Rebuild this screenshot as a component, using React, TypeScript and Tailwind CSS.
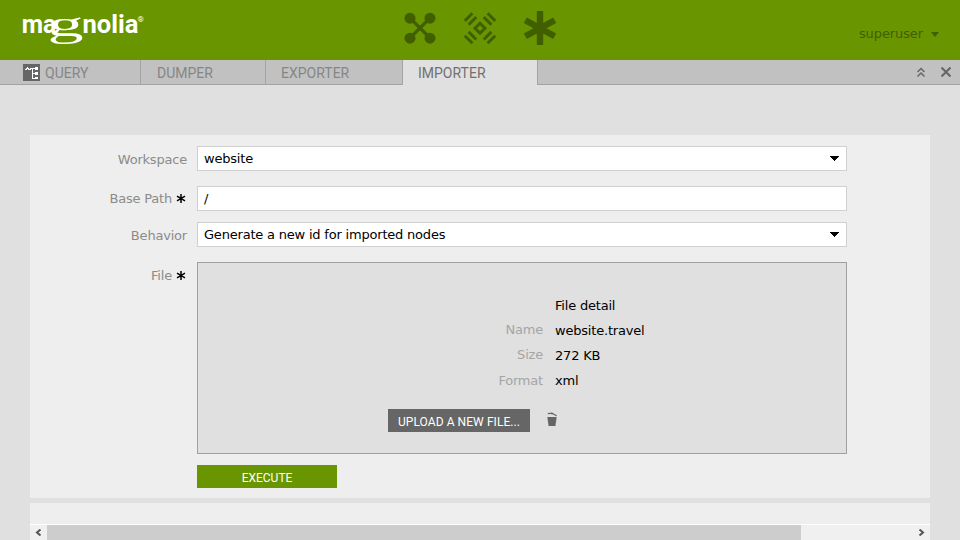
import React from "react";

const verdana = "font-['DejaVu_Sans',Verdana,sans-serif] text-[13px]";
const din = "font-['Roboto',sans-serif]";

function Logo() {
  return (
    <svg width="126" height="42" viewBox="0 0 126 42" fill="#fff" className="block overflow-visible">
      <g fontFamily="Roboto, sans-serif" fontWeight="700" fontSize="26">
        <text x="0.7" y="26" textLength="34.5" lengthAdjust="spacingAndGlyphs">ma</text>
        <text x="61.5" y="26" textLength="56" lengthAdjust="spacingAndGlyphs">nolia</text>
      </g>
      <text transform="translate(26.5 29) scale(2.07 1)" fontFamily="Liberation Serif, serif" fontSize="35" x="0" y="0">g</text>
      <text x="116.5" y="14.5" fontFamily="Roboto, sans-serif" fontSize="8">®</text>
    </svg>
  );
}

function AppsIcon() {
  return (
    <svg width="34" height="36" viewBox="0 0 34 36" fill="#425f00" className="block">
      <path d="M7 8 L27 28 M27 8 L7 28" stroke="#425f00" strokeWidth="3.2" />
      <circle cx="7" cy="8.2" r="5.5" />
      <circle cx="27" cy="8.2" r="5.5" />
      <circle cx="7" cy="28.2" r="5.5" />
      <circle cx="27" cy="28.2" r="5.5" />
    </svg>
  );
}

function PulseIcon() {
  return (
    <svg width="34" height="36" viewBox="0 0 34 36" fill="none" stroke="#425f00" strokeWidth="2.9" className="block">
      <path d="M17 13.3 L22 18.3 L17 23.3 L12 18.3Z" />
      <path d="M1.8 10.9 L9.4 3.3 M5.6 14.7 L13.2 7.1" />
      <path d="M32.2 10.9 L24.6 3.3 M28.4 14.7 L20.8 7.1" />
      <path d="M1.8 25.7 L9.4 33.3 M5.6 21.9 L13.2 29.5" />
      <path d="M32.2 25.7 L24.6 33.3 M28.4 21.9 L20.8 29.5" />
    </svg>
  );
}

function AsteriskIcon() {
  return (
    <svg width="34" height="36" viewBox="0 0 34 36" stroke="#425f00" strokeWidth="6.4" className="block">
      <path d="M17 1 V35 M2.3 10.2 L31.7 26.2 M31.7 10.2 L2.3 26.2" />
    </svg>
  );
}

function QueryIcon() {
  return (
    <svg width="17" height="17" viewBox="0 0 17 17" className="block" shapeRendering="crispEdges">
      <rect width="17" height="17" fill="#666" />
      <path d="M2 5h1V4h1V3h1v1h1v1h2v1H5V5H4v1H2z" fill="#fff" />
      <path d="M7 4h7M9.5 4v11M9 9.5h4M9 14.5h4" stroke="#fff" fill="none" />
      <path d="M12 3h3v3h-3zM12 8h3v3h-3zM12 13h3v2h-3z" fill="#fff" />
    </svg>
  );
}

function Star() {
  return (
    <svg width="10" height="10" viewBox="0 0 10 10" fill="none" stroke="#000" strokeWidth="1.5" className="ml-1 mr-px block">
      <path d="M5 0V9M1 2.2L9 6.8M9 2.2L1 6.8" />
    </svg>
  );
}

function Caret() {
  return (
    <svg width="9" height="5" viewBox="0 0 9 5" className="block" shapeRendering="crispEdges">
      <path d="M0 0h9v1H8v1H7v1H6v1H5v1H4V4H3V3H2V2H1V1H0z" />
    </svg>
  );
}

function Row({ label, required, labelTop, className, children }: { label: string; required?: boolean; labelTop: string; className: string; children: React.ReactNode }) {
  return (
    <div className={`flex ${className}`}>
      <div className={`mr-[10px] flex h-[18px] w-[157px] shrink-0 items-center justify-end leading-[18px] text-[#8b8b8b] ${labelTop}`}>
        <span className="tracking-[-0.2px]">{label}</span>
        {required && <Star />}
      </div>
      {children}
    </div>
  );
}

function Field({ value, select }: { value: string; select?: boolean }) {
  return (
    <div className="flex h-[25px] w-[650px] items-center justify-between border border-[#d0d0d0] bg-white pr-[7px] pl-[6px] leading-[22px] text-black">
      <span className="tracking-[-0.2px]">{value}</span>
      {select && <Caret />}
    </div>
  );
}

function Detail({ label, value, raised }: { label: string; value: string; raised?: boolean }) {
  return (
    <div className="flex h-[25px] tracking-[-0.2px]">
      <div className={`mr-3 w-[345px] text-right text-[#a5a5a5] ${raised ? "leading-[23px]" : "leading-[25px]"}`}>{label}</div>
      <div className="leading-[25px] text-black">{value}</div>
    </div>
  );
}

export default function App() {
  return (
    <div className={`flex h-[540px] w-[960px] flex-col overflow-hidden bg-[#e0e0e0] ${verdana}`}>
      <header className="flex h-[60px] shrink-0 bg-[#699600]">
        <div className="w-[403px] pt-[7px] pl-[21px]">
          <Logo />
        </div>
        <nav className="flex gap-[26px] pt-[10px]">
          <AppsIcon />
          <PulseIcon />
          <AsteriskIcon />
        </nav>
        <div className="mt-[25px] ml-auto flex h-[18px] items-center gap-2 pr-[21px] text-[#425f00]">
          <span className="tracking-[-0.1px]">superuser</span>
          <svg width="8" height="5" viewBox="0 0 8 5" className="block">
            <path d="M0 0h8L4 5z" fill="#425f00" />
          </svg>
        </div>
      </header>

      <div className={`flex h-[25px] shrink-0 text-[14px] leading-[26px] text-[#868686] ${din}`}>
        <div className="flex w-[141px] border-r border-b border-[#a3a3a3] bg-[#c1c1c1] pl-[23px]">
          <div className="mt-1 mr-[5px]">
            <QueryIcon />
          </div>
          <span>QUERY</span>
        </div>
        <div className="w-[125px] border-r border-b border-[#a3a3a3] bg-[#c1c1c1] pl-4">DUMPER</div>
        <div className="w-[137px] border-r border-b border-[#a3a3a3] bg-[#c1c1c1] pl-[15px]">EXPORTER</div>
        <div className="w-[134px] bg-[#e0e0e0] pl-[15px] text-[#707070]">IMPORTER</div>
        <div className="flex flex-1 items-start justify-end border-b border-l border-[#a3a3a3] bg-[#c1c1c1] pt-[7px] pr-[9px]">
          <svg width="8" height="11" viewBox="0 0 8 11" fill="none" stroke="#666" strokeWidth="1.5" className="mr-4 block">
            <path d="M0.5 5L4 1.5L7.5 5M0.5 9.5L4 6L7.5 9.5" />
          </svg>
          <svg width="10" height="10" viewBox="0 0 10 10" stroke="#666" strokeWidth="2.1" className="block">
            <path d="M0.5 0.5L9.5 9.5M9.5 0.5L0.5 9.5" />
          </svg>
        </div>
      </div>

      <main className="mx-[30px] mt-[50px] h-[363px] shrink-0 bg-[#eee] pt-[11px]">
        <Row label="Workspace" labelTop="mt-[5px]" className="h-10">
          <Field value="website" select />
        </Row>
        <Row label="Base Path" required labelTop="mt-1" className="h-9">
          <Field value="/" />
        </Row>
        <Row label="Behavior" labelTop="mt-[5px]" className="h-10">
          <Field value="Generate a new id for imported nodes" select />
        </Row>
        <Row label="File" required labelTop="mt-[5px]" className="h-[203px]">
          <div className="h-[192px] w-[650px] border border-[#a0a0a0] bg-[#e0e0e0] pt-[30px]">
            <Detail label="" value="File detail" />
            <Detail label="Name" value="website.travel" raised />
            <Detail label="Size" value="272 KB" raised />
            <Detail label="Format" value="xml" />
            <div className="mt-4 ml-[190px] flex">
              <button className={`h-[23px] w-[142px] bg-[#666] pt-px text-center text-[12px] leading-[25px] tracking-[0.07px] whitespace-nowrap text-white ${din}`}>
                UPLOAD A NEW FILE...
              </button>
              <svg width="10" height="14" viewBox="0 0 10 14" fill="#666" className="mt-[3px] ml-[17px] block">
                <path d="M0.3 5h9.4L8.4 14H1.6z" />
                <path d="M0.8 1.6C4 1 7 1.8 9.6 3.8M4 1L6.6 1.9" stroke="#666" strokeWidth="1.4" fill="none" />
              </svg>
            </div>
          </div>
        </Row>
        <button className={`ml-[167px] block h-[23px] w-[140px] bg-[#699600] pt-px text-center text-[12px] leading-[25px] text-white ${din}`}>
          EXECUTE
        </button>
      </main>

      <section className="mx-[30px] mt-[5px] flex h-[37px] shrink-0 flex-col bg-[#eee]">
        <div className="h-[21px]" />
        <div className="flex h-4 border-t border-white bg-[#f0f0f0]">
          <div className="flex w-[17px] justify-center pt-1">
            <svg width="7" height="7" viewBox="0 0 7 7" fill="none" stroke="#555" strokeWidth="2" className="block">
              <path d="M5.5 0.5L2 3.5L5.5 6.5" />
            </svg>
          </div>
          <div className="w-[754px] bg-[#cdcdcd]" />
          <div className="ml-auto pt-1 pr-[5px]">
            <svg width="7" height="7" viewBox="0 0 7 7" fill="none" stroke="#555" strokeWidth="2" className="block">
              <path d="M1.5 0.5L5 3.5L1.5 6.5" />
            </svg>
          </div>
        </div>
      </section>
    </div>
  );
}
